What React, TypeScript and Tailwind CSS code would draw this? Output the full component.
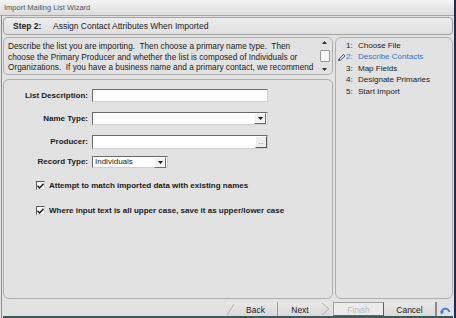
import React from 'react'

const steps = [
  { n: '1:', label: 'Choose File' },
  { n: '2:', label: 'Describe Contacts', active: true },
  { n: '3:', label: 'Map Fields' },
  { n: '4:', label: 'Designate Primaries' },
  { n: '5:', label: 'Start Import' },
]

function DropButton() {
  return (
    <div className="w-[12px] h-[11px] mr-[1px] flex items-center justify-center bg-[#f2f2f2] border border-t-[#ffffff] border-l-[#ffffff] border-r-[#6e6e6e] border-b-[#6e6e6e]">
      <svg width="5" height="3" viewBox="0 0 5 3">
        <path d="M0 0h5L2.5 3z" fill="#111" />
      </svg>
    </div>
  )
}

function Field({ label, children }: { label: string; children: React.ReactNode }) {
  return (
    <div className="flex items-center">
      <div className="w-[88px] pr-[4px] text-right font-bold text-[#1a1a1a]">{label}</div>
      {children}
    </div>
  )
}

function Check({ label }: { label: string }) {
  return (
    <div className="flex items-center gap-[4px] pl-[32px]">
      <div className="w-[9px] h-[9px] bg-white border border-t-[#5a5a5a] border-l-[#5a5a5a] border-r-[#d8d8d8] border-b-[#d8d8d8] flex items-center justify-center">
        <svg width="7" height="6" viewBox="0 0 7 6">
          <path d="M0.5 2.8L2.6 5L6.5 0.8" fill="none" stroke="#111" strokeWidth="1.4" />
        </svg>
      </div>
      <span className="font-bold text-[#1a1a1a]">{label}</span>
    </div>
  )
}

export default function App() {
  return (
    <div className="w-[456px] h-[318px] overflow-hidden bg-[#e2e2e2] border-r-[2px] border-[#1d2a66] flex flex-col font-['Liberation_Sans',Arial,sans-serif] text-[8px] leading-none text-[#222]">
      {/* title bar */}
      <div className="h-[16px] shrink-0 flex items-center pl-[4px] bg-gradient-to-b from-[#f4f4f4] to-[#dcdcdc] border-b border-[#a9a9a9] text-[#555] text-[7.5px]">
        Import Mailing List Wizard
      </div>

      <div className="flex-1 flex flex-col ml-[1px] border-l border-[#8c8c8c] pl-[1px] pr-[1px]">
        {/* step header */}
        <div className="mt-[1px] h-[18px] shrink-0 flex items-center rounded-[4px] border border-[#a3a3a3] bg-gradient-to-b from-[#ececec] to-[#e0e0e0] pl-[9px] text-[8.5px]">
          <span className="font-bold w-[40px]">Step 2:</span>
          <span>Assign Contact Attributes When Imported</span>
        </div>

        <div className="mt-[2px] h-[262px] shrink-0 flex gap-[2px]">
          {/* left column */}
          <div className="w-[330px] flex flex-col gap-[4px]">
            <div className="h-[38px] shrink-0 rounded-[5px] border border-[#b0b0b0] flex pl-[4px] pr-[2px] py-[2px]">
              <div className="flex-1 overflow-hidden pt-[2px] leading-[10.5px] whitespace-pre text-[8.25px] text-[#1a1a1a]">
                <div>Describe the list you are importing.  Then choose a primary name type.  Then</div>
                <div>choose the Primary Producer and whether the list is composed of Individuals or</div>
                <div>Organizations.  If you have a business name and a primary contact, we recommend</div>
              </div>
              <div className="w-[11px] flex flex-col items-center justify-between py-[1px]">
                <svg width="5" height="3" viewBox="0 0 5 3"><path d="M0 3h5L2.5 0z" fill="#333" /></svg>
                <div className="w-[10px] h-[12px] bg-[#f6f6f6] border border-[#9a9a9a] rounded-[1px]" />
                <svg width="5" height="3" viewBox="0 0 5 3"><path d="M0 0h5L2.5 3z" fill="#333" /></svg>
              </div>
            </div>

            <div className="flex-1 rounded-[6px] border border-[#b0b0b0] pt-[9px] flex flex-col">
              <div className="flex flex-col gap-[10px]">
                <Field label="List Description:">
                  <div className="w-[176px] h-[13px] bg-white border border-t-[#6a6a6a] border-l-[#6a6a6a] border-r-[#d0d0d0] border-b-[#d0d0d0]" />
                </Field>
                <Field label="Name Type:">
                  <div className="w-[176px] h-[13px] bg-white border border-t-[#6a6a6a] border-l-[#6a6a6a] border-r-[#d0d0d0] border-b-[#d0d0d0] flex items-center justify-end">
                    <DropButton />
                  </div>
                </Field>
                <Field label="Producer:">
                  <div className="w-[176px] h-[14px] bg-white border border-t-[#6a6a6a] border-l-[#6a6a6a] border-r-[#d0d0d0] border-b-[#d0d0d0] flex items-center justify-end">
                    <div className="w-[12px] h-[12px] flex items-end justify-center pb-[2px] bg-[#eeeeee] border border-t-[#ffffff] border-l-[#ffffff] border-r-[#555] border-b-[#555] text-[6px] leading-none">
                      ...
                    </div>
                  </div>
                </Field>
                <div className="-mt-[3px]">
                  <Field label="Record Type:">
                    <div className="w-[76px] h-[12px] bg-white border border-t-[#6a6a6a] border-l-[#6a6a6a] border-r-[#d0d0d0] border-b-[#d0d0d0] flex items-center justify-between pl-[2px]">
                      <span className="text-[#222]">Individuals</span>
                      <DropButton />
                    </div>
                  </Field>
                </div>
              </div>
              <div className="mt-[13px] flex flex-col gap-[16px]">
                <Check label="Attempt to match imported data with existing names" />
                <Check label="Where input text is all upper case,  save it as upper/lower case" />
              </div>
            </div>
          </div>

          {/* right column */}
          <div className="flex-1 rounded-[6px] border border-[#b0b0b0] pt-[2px] flex flex-col text-[8px]">
            {steps.map((s) => (
              <div key={s.n} className={`h-[11.5px] flex items-center ${s.active ? 'text-[#3a6fc8]' : 'text-[#1a1a1a]'}`}>
                <div className="w-[10px] pl-[2px] flex items-center">
                  {s.active && (
                    <svg width="8" height="7" viewBox="0 0 8 7">
                      <path d="M0.5 6.5L1 4.8L5.5 0.5L7 2L2.5 6.2z" fill="#e8e8e8" stroke="#2a3a7a" strokeWidth="0.8" />
                      <path d="M0.5 6.5L1 4.8L2.5 6.2z" fill="#2a3a7a" />
                    </svg>
                  )}
                </div>
                <span className="w-[12px]">{s.n}</span>
                <span>{s.label}</span>
              </div>
            ))}
          </div>
        </div>

        {/* button row */}
        <div className="flex-1 flex items-end justify-end border-b-[2px] border-[#3a5a5a]">
          <div className="h-[14px] flex items-center text-[8.5px]">
            <div className="relative w-[52px] h-full flex items-center justify-center pt-[3px] border-r border-[#9a9a9a] bg-gradient-to-b from-[#e8e8e8] to-[#dadada]">
              <svg className="absolute left-0 top-0" width="8" height="14" viewBox="0 0 8 14">
                <path d="M8 2L1 13" stroke="#b0b0b0" fill="none" />
              </svg>
              <span className="pl-[8px]">Back</span>
            </div>
            <div className="relative w-[52px] h-full flex items-center justify-center pt-[3px] bg-gradient-to-b from-[#e8e8e8] to-[#dadada]">
              <span className="pr-[8px]">Next</span>
              <svg className="absolute right-0 top-0" width="8" height="14" viewBox="0 0 8 14">
                <path d="M0 1L7 7L0 13" stroke="#b0b0b0" fill="none" />
              </svg>
            </div>
            <div className="ml-[3px] w-[51px] h-[14px] flex items-center justify-center pt-[2px] border border-t-[#a0a0a0] border-l-[#a0a0a0] border-r-[#606060] border-b-[#606060] bg-[#ececec] text-[#b8b8b8]">
              Finish
            </div>
            <div className="w-[53px] h-full flex items-center justify-center pt-[3px] border-r-[2px] border-[#8a8a8a] bg-gradient-to-b from-[#e8e8e8] to-[#dadada]">
              Cancel
            </div>
            <div className="w-[16px] h-full flex items-center justify-center pt-[2px]">
              <svg width="11" height="10" viewBox="0 0 11 10">
                <path d="M1.5 8.5A4 4 0 1 1 9.5 7" fill="none" stroke="#3d7ad6" strokeWidth="1.8" />
                <path d="M0 5.8L1.8 9.5L4 6.5z" fill="#3d7ad6" />
              </svg>
            </div>
          </div>
        </div>
      </div>
    </div>
  )
}
